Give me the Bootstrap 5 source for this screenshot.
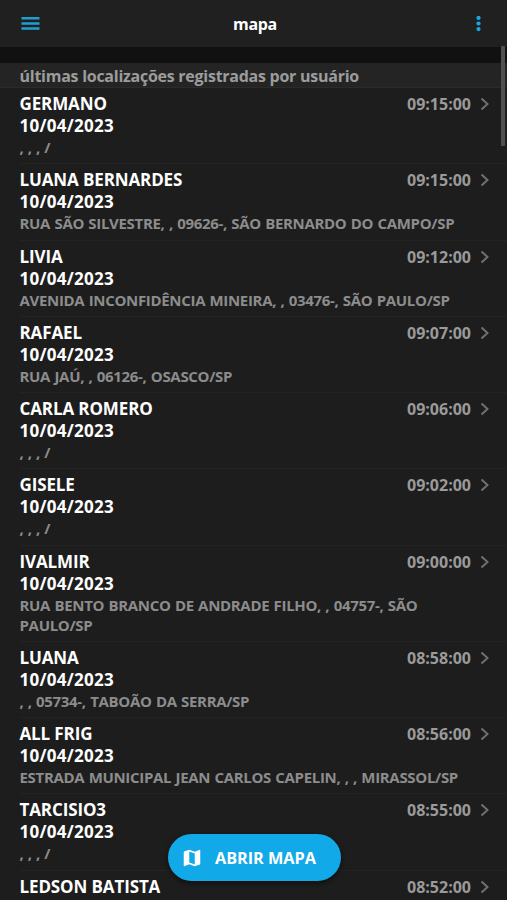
<!DOCTYPE html>
<html lang="pt-BR">
<head>
<meta charset="utf-8">
<meta name="viewport" content="width=device-width, initial-scale=1">
<title>mapa</title>
<link href="https://cdn.jsdelivr.net/npm/bootstrap@5.3.0/dist/css/bootstrap.min.css" rel="stylesheet">
<style>
  body { background: #1d1d1d; color: #fff; font-family: "Open Sans", "Noto Sans", sans-serif; font-weight: 700; }
  svg { display: block; flex: none; }
  .app-bar { height: 47px; background: #202020; padding: 0 23px 0 20px; }
  .app-title { font-size: 16px; letter-spacing: -.3px; margin-left: 3px; }
  .accent { color: #1f9fd0; }
  .accent-bright { color: #1aa6e0; }
  .gap-strip { height: 16px; background: #111; }
  .section-title { height: 25px; padding-left: 19.5px; background: #242424; border-bottom: 1px solid #2b2b2b; color: #9c9c9c; font-size: 16px; line-height: 26px; letter-spacing: -.26px; }
  .entries { background: #1d1d1d; }
  .entry { padding: 4.95px 17px 5.45px 0; margin-left: 19.5px; border-bottom: 1px solid #232323; }
  .who { font-size: 17px; line-height: 22px; letter-spacing: -.12px; }
  .day { font-size: 17px; line-height: 22px; letter-spacing: .27px; }
  .place { font-size: 15px; line-height: 19.9px; color: #8c8c8c; letter-spacing: -.32px; word-spacing: .75px; margin-top: 1px; max-width: 445px; }
  .clock { font-size: 16px; line-height: 22px; color: #9a9a9a; }
  .chev { margin-left: 9px; }
  .thumb { position: absolute; right: 2px; top: 46px; width: 4px; height: 100px; background: #505050; border-radius: 1px; }
  .open-map { position: absolute; left: 168px; top: 834px; width: 173px; height: 47px; background: #12a9e8; color: #fff; border: 0; padding: 1px 0 0 13px; font-weight: 700; font-size: 16.3px; box-shadow: 0 2px 5px rgba(0,0,0,.55); }
  .open-label { margin-left: 12px; letter-spacing: -.05px; }
</style>
<script src="https://cdn.jsdelivr.net/npm/bootstrap@5.3.0/dist/js/bootstrap.bundle.min.js"></script>
</head>
<body>
<div class="vh-100 overflow-hidden position-relative d-flex flex-column">
  <header class="app-bar d-flex align-items-center justify-content-between flex-shrink-0">
    <svg class="accent" width="20" height="16" viewBox="0 0 20 16"><path d="M1.500 2.300h18M1.500 7.500h18M1.500 12.500h18" stroke="currentColor" stroke-width="2.500"/></svg>
    <span class="app-title">mapa</span>
    <svg class="accent-bright" width="17" height="16" viewBox="0 0 17 16" fill="currentColor"><circle cx="11.500" cy="1.900" r="2.100"/><circle cx="11.500" cy="7.500" r="2.100"/><circle cx="11.500" cy="13.100" r="2.100"/></svg>
  </header>
  <div class="gap-strip flex-shrink-0"></div>
  <div class="section-title flex-shrink-0"><span>últimas localizações registradas por usuário</span></div>
  <main class="entries flex-shrink-0" id="entries"></main>
  <div class="thumb"></div>
  <button class="open-map btn rounded-pill d-flex align-items-center" type="button">
    <svg width="22" height="22" viewBox="0 0 24 24" fill="currentColor"><path d="M20.500 3l-.16.03L15 5.100 9 3 3.360 4.900c-.21.07-.36.25-.36.48V20.500c0 .28.22.5.5.5l.16-.03L9 18.900l6 2.100 5.640-1.900c.21-.07.36-.25.36-.48V3.500c0-.28-.22-.5-.5-.5zM15 19l-6-2.110V5l6 2.110V19z"/></svg>
    <span class="open-label">ABRIR MAPA</span>
  </button>
</div>
<script>
  const data = [
    ["GERMANO", "09:15:00", ", , , /"],
    ["LUANA BERNARDES", "09:15:00", "RUA SÃO SILVESTRE, , 09626-, SÃO BERNARDO DO CAMPO/SP"],
    ["LIVIA", "09:12:00", "AVENIDA INCONFIDÊNCIA MINEIRA, , 03476-, SÃO PAULO/SP"],
    ["RAFAEL", "09:07:00", "RUA JAÚ, , 06126-, OSASCO/SP"],
    ["CARLA ROMERO", "09:06:00", ", , , /"],
    ["GISELE", "09:02:00", ", , , /"],
    ["IVALMIR", "09:00:00", "RUA BENTO BRANCO DE ANDRADE FILHO, , 04757-, SÃO PAULO/SP"],
    ["LUANA", "08:58:00", ", , 05734-, TABOÃO DA SERRA/SP"],
    ["ALL FRIG", "08:56:00", "ESTRADA MUNICIPAL JEAN CARLOS CAPELIN, , , MIRASSOL/SP"],
    ["TARCISIO3", "08:55:00", ", , , /"],
    ["LEDSON BATISTA", "08:52:00", ""]
  ];
  document.getElementById("entries").innerHTML = data.map(([name, time, place]) => `
    <article class="entry">
      <div class="d-flex justify-content-between">
        <span class="who">${name}</span>
        <div class="d-flex align-items-center"><span class="clock">${time}</span>
          <svg width="10" height="14" viewBox="0 0 10 14" class="chev"><path d="M1.500 1.500l6 5.500-6 5.500" fill="none" stroke="#707070" stroke-width="2"/></svg>
        </div>
      </div>
      ${place ? `<div class="day">10/04/2023</div><div class="place">${place}</div>` : ""}
    </article>`).join("");
</script>
</body>
</html>
